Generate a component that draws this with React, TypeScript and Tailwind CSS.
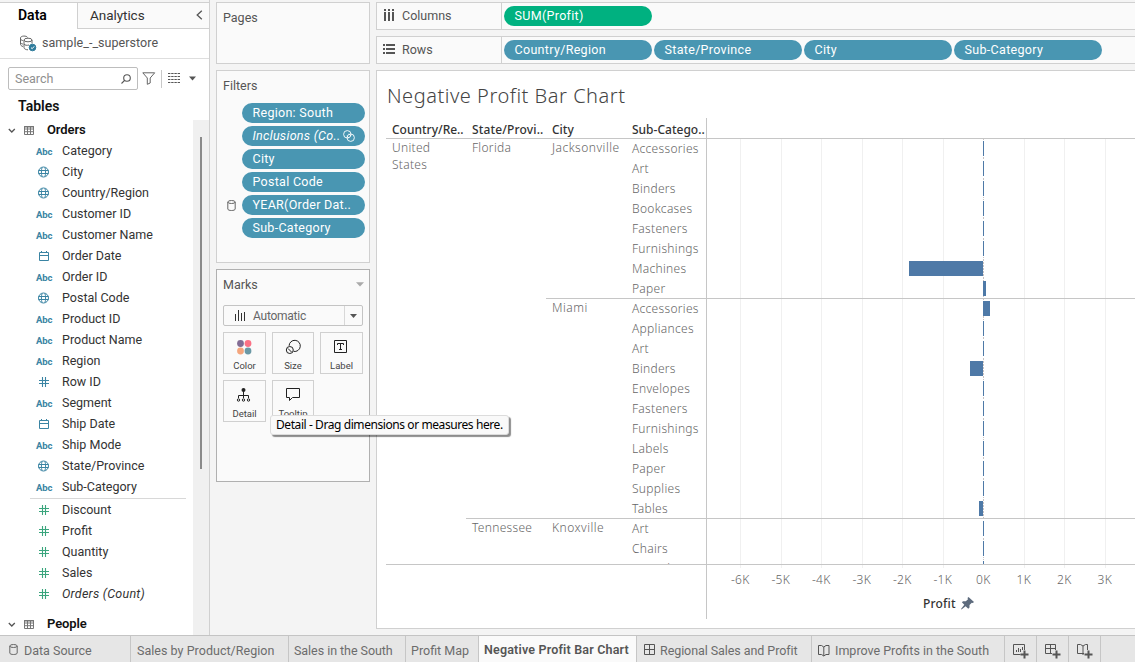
import React from "react";

type FieldKind = "abc" | "geo" | "date" | "num";
type Field = { kind: FieldKind; name: string };

const dimensions: Field[] = [
  { kind: "abc", name: "Category" },
  { kind: "geo", name: "City" },
  { kind: "geo", name: "Country/Region" },
  { kind: "abc", name: "Customer ID" },
  { kind: "abc", name: "Customer Name" },
  { kind: "date", name: "Order Date" },
  { kind: "abc", name: "Order ID" },
  { kind: "geo", name: "Postal Code" },
  { kind: "abc", name: "Product ID" },
  { kind: "abc", name: "Product Name" },
  { kind: "abc", name: "Region" },
  { kind: "num", name: "Row ID" },
  { kind: "abc", name: "Segment" },
  { kind: "date", name: "Ship Date" },
  { kind: "abc", name: "Ship Mode" },
  { kind: "geo", name: "State/Province" },
  { kind: "abc", name: "Sub-Category" },
];
const measures = ["Discount", "Profit", "Quantity", "Sales", "Orders (Count)"];

type City = { name: string; rows: [string, number, number][] };
// Each row holds its label, then the bar's start and width in pixels from the zero line.
const florida: City[] = [
  {
    name: "Jacksonville",
    rows: [
      ["Accessories", 0, 1], ["Art", 0, 1], ["Binders", 0, 1], ["Bookcases", 0, 1],
      ["Fasteners", 0, 1], ["Furnishings", 0, 1], ["Machines", -74, 74], ["Paper", 0, 3],
    ],
  },
  {
    name: "Miami",
    rows: [
      ["Accessories", 0, 7], ["Appliances", 0, 1], ["Art", 0, 1], ["Binders", -13, 13],
      ["Envelopes", 0, 1], ["Fasteners", 0, 1], ["Furnishings", 0, 1], ["Labels", 0, 1],
      ["Paper", 0, 1], ["Supplies", 0, 1], ["Tables", -4, 4],
    ],
  },
];
const tennessee: City[] = [
  { name: "Knoxville", rows: [["Art", 0, 1], ["Chairs", 0, 1], ["Furnishings", 0, 1]] },
];
const bars = [...florida, ...tennessee].flatMap((c) => c.rows);
const ticks: [number, string][] = [
  [33, "-6K"], [74, "-5K"], [114, "-4K"], [155, "-3K"], [195, "-2K"],
  [236, "-1K"], [276, "0K"], [317, "1K"], [357, "2K"], [398, "3K"],
];
const ZERO = 276;

function FieldIcon({ kind, green }: { kind: FieldKind; green?: boolean }) {
  if (kind === "abc")
    return <span className="w-[17px] text-[9.5px] leading-none font-bold tracking-[-0.1px] text-[#3a84a3]">Abc</span>;
  const stroke = green ? "#3aa57d" : "#3a84a3";
  return (
    <svg width="12" height="12" viewBox="0 0 12 12" fill="none" stroke={stroke} className="-mt-px ml-[2px] shrink-0">
      {kind === "geo" && (
        <>
          <circle cx="5.5" cy="6" r="5" />
          <path d="M0.5 4.5H10.5M0.5 7.5H10.5M4 1.5C3.2 4.2 3.2 7.8 4 10.5M7 1.5C7.8 4.2 7.8 7.8 7 10.5" />
        </>
      )}
      {kind === "date" && <path d="M1.5 2.5H10.5V10.5H1.5ZM1.5 5.5H10.5M3.5 1V3M8.5 1V3" />}
      {kind === "num" && <path d="M4.5 1V11M7.5 1V11M1 4.5H11M1 7.5H11" strokeWidth="1.1" />}
    </svg>
  );
}

function TableHeading({ name }: { name: string }) {
  return (
    <div className="flex h-[21px] items-center pl-[8px]">
      <svg width="8" height="12" viewBox="0 0 8 12" fill="none" stroke="#555" strokeWidth="1.3" className="-mt-px">
        <path d="M0.8 5L3.8 8L6.8 5" />
      </svg>
      <svg width="11" height="11" viewBox="0 0 11 11" fill="none" stroke="#777" className="ml-[8px]">
        <path d="M0.5 1.5H9.5V9.5H0.5Z M0.5 4H9.5M0.5 6.7H9.5M3.5 2V9.5M6.5 2V9.5" />
        <path d="M0 1.8H10" strokeWidth="1.4" />
      </svg>
      <span className="-mt-[2px] ml-[12px] text-[13px] font-semibold tracking-[-0.1px] text-[#111]">{name}</span>
    </div>
  );
}

function Cylinder({ className = "" }: { className?: string }) {
  return (
    <svg width="9" height="11" viewBox="0 0 9 11" fill="none" stroke="#666" className={className}>
      <ellipse cx="4.5" cy="2" rx="3.7" ry="1.5" />
      <path d="M0.8 2V9C0.8 11 8.2 11 8.2 9V2" />
    </svg>
  );
}

function DataPane() {
  return (
    <aside className="flex w-[210px] shrink-0 flex-col border-r border-[#d0d0d0] bg-white">
      <div className="h-[2px] bg-[#f4f4f4]" />
      <div className="flex h-[27px] border-t border-[#d0d0d0]">
        <div className="w-[77px] pl-[18px] text-[14px] leading-[25px] font-semibold text-black">Data</div>
        <div className="flex flex-1 items-center justify-between border-b border-l border-[#d0d0d0] bg-[#fafafa] pr-[6px] pl-[12px]">
          <span className="text-[13.5px] tracking-[-0.05px] text-[#333]">Analytics</span>
          <svg width="7" height="10" viewBox="0 0 7 10" fill="none" stroke="#555" strokeWidth="1.3" className="-mt-[2px]">
            <path d="M5.8 0.8L1.2 5L5.8 9.2" />
          </svg>
        </div>
      </div>
      <div className="flex h-[30px] items-center border-b border-[#dedede] pl-[19px]">
        <svg width="18" height="17" viewBox="0 0 18 17" fill="none" stroke="#666">
          <path d="M4 11.5C2 11 1.5 10 1.5 9V3C1.5 0.5 8 0.5 8.5 2.5M1.5 4C2 5 3 5.5 4 5.5M1.5 7.5C2 8.5 3 9 4 9" />
          <ellipse cx="9" cy="5" rx="4" ry="1.8" />
          <path d="M5 5V12.5C5 14 7 14.8 9 14.8M13 5V8.5M5 9C6 10.5 8 10.5 10 10" />
          <circle cx="13.5" cy="12.5" r="3.3" fill="#2f7c9c" stroke="#2f7c9c" />
          <path d="M12 12.6L13.2 13.7L15.2 11.4" stroke="#fff" />
        </svg>
        <span className="ml-[5px] text-[12.5px] tracking-[0.05px] text-[#555]">sample_-_superstore</span>
      </div>
      <div className="flex h-[39px] items-center pl-[8px]">
        <div className="flex h-[23px] w-[130px] items-center justify-between rounded-[2px] border border-[#bdbdbd] pr-[6px] pl-[6px]">
          <span className="mt-px text-[12.5px] text-[#8f8f8f]">Search</span>
          <svg width="10" height="10" viewBox="0 0 10 10" fill="none" stroke="#555" strokeWidth="1.1">
            <circle cx="6" cy="4" r="3.3" />
            <path d="M3.6 6.4L0.5 9.5" />
          </svg>
        </div>
        <svg width="14" height="13" viewBox="0 0 14 13" fill="none" stroke="#666" className="ml-[4px]">
          <path d="M0.8 0.8H12.7L8.2 6V11L5.3 12.3V6Z" />
        </svg>
        <div className="ml-[5px] h-[18px] w-px bg-[#c8c8c8]" />
        <svg width="12" height="10" viewBox="0 0 12 10" stroke="#555" strokeDasharray="2.4 0.8" className="-mt-[2px] ml-[6px]">
          <path d="M0 0.5H12M0 3.5H12M0 6.5H12M0 9.5H12" />
        </svg>
        <svg width="7" height="5" viewBox="0 0 7 5" fill="#555" className="ml-[9px]">
          <path d="M0 0.5H7L3.5 4.5Z" />
        </svg>
      </div>
      <div className="h-[22px] pl-[18px] text-[14px] leading-[17px] font-semibold text-[#111]">Tables</div>
      <div className="flex min-h-0 flex-1">
        <div className="flex flex-1 flex-col">
          <TableHeading name="Orders" />
          {dimensions.map((f) => (
            <div key={f.name} className="flex h-[21px] items-center pl-[36px]">
              <span className="flex w-[26px] items-center">
                <FieldIcon kind={f.kind} />
              </span>
              <span className="text-[12.5px] whitespace-nowrap text-[#333]">{f.name}</span>
            </div>
          ))}
          <div className="mr-[7px] ml-[30px] h-px bg-[#d8d8d8]" />
          <div className="pt-px">
            {measures.map((m) => (
              <div key={m} className="flex h-[21px] items-center pl-[36px]">
                <span className="flex w-[26px] items-center">
                  <FieldIcon kind="num" green />
                </span>
                <span className={`text-[12.5px] text-[#333] ${m === "Orders (Count)" ? "tracking-[0.25px] italic" : ""}`}>{m}</span>
              </div>
            ))}
          </div>
          <div className="mt-[9px]">
            <TableHeading name="People" />
          </div>
        </div>
        <div className="w-[16px] bg-[#f0f0f0] pt-[17px] pl-[7px]">
          <div className="h-[332px] w-[2px] bg-[#8a8a8a]" />
        </div>
      </div>
    </aside>
  );
}

function MarkButton({ label, children }: { label: string; children: React.ReactNode }) {
  return (
    <div className="flex h-[42px] flex-col items-center justify-between border border-[#d0d0d0] bg-[#fafafa] pt-[5px] pb-[2px]">
      <svg width="18" height="18" viewBox="0 0 18 18" fill="none" stroke="#222" className="-ml-px">
        {children}
      </svg>
      <span className="text-[9.5px] leading-[11px] text-[#444]">{label}</span>
    </div>
  );
}

const filterPills = ["Region: South", "Inclusions (Co..", "City", "Postal Code", "YEAR(Order Dat..", "Sub-Category"];

function Cards() {
  return (
    <div className="flex w-[154px] shrink-0 flex-col gap-[6px] text-[13px] text-[#555]">
      <section className="h-[62px] border border-[#d0d0d0] bg-[#fafafa] pt-[5px] pl-[6px] text-[12.5px] leading-[20px]">Pages</section>
      <section className="h-[193px] border border-[#d0d0d0] bg-[#fafafa] pt-[5px] pl-[6px]">
        <div className="text-[12.5px] leading-[20px]">Filters</div>
        <div className="mt-[7px] flex flex-col gap-[3px]">
          {filterPills.map((p, i) => (
            <div key={p} className="flex h-[20px] items-center">
              <div className="w-[19px] pl-[4px]">{i === 4 && <Cylinder />}</div>
              <div className="flex h-[20px] w-[123px] items-center justify-between rounded-full bg-[#4996b2] pr-[10px] pl-[10.5px] text-[12.5px] text-white">
                <span className={`tracking-[0.28px] whitespace-nowrap ${i === 1 ? "italic" : ""}`}>{p}</span>
                {i === 1 && (
                  <svg width="12" height="12" viewBox="0 0 12 12" fill="none" stroke="#fff" strokeWidth="0.9">
                    <circle cx="4.3" cy="4.3" r="3.7" />
                    <circle cx="7.7" cy="7.7" r="3.7" />
                    <path d="M3.8 6L6 8.2M6 3.8L8.2 6" />
                  </svg>
                )}
              </div>
            </div>
          ))}
        </div>
      </section>
      <section className="h-[213px] border border-[#b0b0b0] bg-[#fafafa] px-[6px] pt-[5px]">
        <div className="flex h-[20px] items-center justify-between text-[12.5px]">
          <span>Marks</span>
          <svg width="8" height="5" viewBox="0 0 8 5" fill="#aaa" className="-mt-[2px] -mr-px">
            <path d="M0 0.3H8L4 4.5Z" />
          </svg>
        </div>
        <div className="mt-[10px] flex h-[21px] items-center rounded-[2px] border border-[#c4c4c4]">
          <svg width="12" height="13" viewBox="0 0 12 13" stroke="#333" className="ml-[10px]">
            <path d="M1.5 5V12M4.5 1V12M7.5 4V12M10.5 3V12" />
          </svg>
          <span className="mt-px ml-[7px] flex-1 text-[12px] tracking-[-0.25px] text-[#666]">Automatic</span>
          <div className="flex h-full w-[18px] items-center justify-center border-l border-[#d8d8d8]">
            <svg width="7" height="4" viewBox="0 0 7 4" fill="#555">
              <path d="M0 0H7L3.5 4Z" />
            </svg>
          </div>
        </div>
        <div className="mt-[6px] grid grid-cols-[43px_42px_43px] gap-[6px]">
          <MarkButton label="Color">
            <g stroke="none">
              <circle cx="5.5" cy="5.5" r="3.4" fill="#826c94" />
              <circle cx="13" cy="5.5" r="3.4" fill="#fb7185" />
              <circle cx="5.5" cy="13" r="3.4" fill="#f4a57c" />
              <circle cx="13" cy="13" r="3.4" fill="#6a98a5" />
            </g>
          </MarkButton>
          <MarkButton label="Size">
            <path d="M5.1 7.8A5.6 5.6 0 1 1 9.6 13.4" />
            <circle cx="5.8" cy="12" r="3.5" />
            <path d="M4 10.5L7.5 14" />
          </MarkButton>
          <MarkButton label="Label">
            <path d="M2.5 2.5H14.5V14.5H2.5ZM5.5 7V5.5H11.5V7M8.5 5.5V11.5M7 11.5H10" />
          </MarkButton>
          <MarkButton label="Detail">
            <circle cx="8.5" cy="4" r="2" fill="#222" stroke="none" />
            <path d="M8.5 5V12M3.5 12V9.5H13.5V12" />
            <circle cx="3.5" cy="14" r="1.2" />
            <circle cx="8.5" cy="14" r="1.2" />
            <circle cx="13.5" cy="14" r="1.2" />
          </MarkButton>
          <MarkButton label="Tooltip">
            <path d="M2.5 2.5H15.5V11.5H8.5L5.5 14.5V11.5H2.5Z" />
          </MarkButton>
        </div>
      </section>
    </div>
  );
}

function Shelf({ label, pills, green }: { label: string; pills: string[]; green?: boolean }) {
  return (
    <div className="flex h-[28px] items-stretch border-y border-l border-[#d0d0d0] bg-[#fafafa]">
      <div className="flex w-[125px] items-center border-r border-[#d0d0d0] pl-[6px]">
        <svg width="13" height="12" viewBox="0 0 13 12" fill="#555" className="-mt-[2px]">
          {green ? (
            <path d="M1 0h2v2H1zM5 0h2v2H5zM9 0h2v2H9zM1 3h2v9H1zM5 3h2v9H5zM9 3h2v9H9z" />
          ) : (
            <path d="M0 1h2v2H0zM0 5h2v2H0zM0 9h2v2H0zM3 1h9v2H3zM3 5h9v2H3zM3 9h9v2H3z" />
          )}
        </svg>
        <span className="ml-[6px] text-[12.5px] text-[#555]">{label}</span>
      </div>
      <div className="flex items-center gap-[2px] pl-[2px]">
        {pills.map((p) => (
          <div
            key={p}
            className={`flex h-[20px] w-[148px] items-center rounded-full pl-[10.5px] text-[12.5px] tracking-[0.32px] text-white ${green ? "bg-[#00b180]" : "bg-[#4996b2]"}`}
          >
            {p}
          </div>
        ))}
      </div>
    </div>
  );
}

function StateGroup({ name, cities, last }: { name: string; cities: City[]; last?: boolean }) {
  return (
    <div className="flex">
      <div className={`w-[80px] pl-[6px] leading-[17px] ${last ? "" : "border-b border-[#c6c6c6]"}`}>{name}</div>
      <div>
        {cities.map((c) => (
          <div key={c.name} className={`flex ${last ? "" : "border-b border-[#c6c6c6]"}`}>
            <div className="w-[80px] pl-[6px] leading-[17px] tracking-[0.5px]">{c.name}</div>
            <div className={last ? "w-[80px]" : "-mb-px w-[80px]"}>
              {c.rows.map(([r]) => (
                <div key={r} className="h-[20px] pl-[6px] leading-[20px]">{r}</div>
              ))}
            </div>
          </div>
        ))}
      </div>
    </div>
  );
}

function Sheet() {
  return (
    <div className="mt-[6px] flex h-[559px] flex-col border-y border-l border-[#d0d0d0] bg-white font-['Noto_Sans',sans-serif]">
      <h1 className="h-[47px] pt-[12px] pl-[10px] text-[20px] leading-[26px] font-light tracking-[0.52px] text-[#444]">
        Negative Profit Bar Chart
      </h1>
      <div className="flex pl-[9px]">
        <div className="w-[320px] text-[12px]">
          <div className="grid h-[21px] grid-cols-4 border-b border-[#c6c6c6] pt-[3px] text-[12px] leading-[17px] font-medium text-[#333]">
            <span className="pl-[6px] whitespace-nowrap">Country/Re..</span>
            <span className="pl-[6px] tracking-[0.15px] whitespace-nowrap">State/Provi..</span>
            <span className="pl-[6px] whitespace-nowrap">City</span>
            <span className="pl-[6px] whitespace-nowrap">Sub-Catego..</span>
          </div>
          <div className="flex h-[426px] overflow-hidden border-b border-[#c6c6c6] font-light tracking-[0.3px] text-[#666]">
            <div className="w-[80px] pr-[20px] pl-[6px] leading-[17px]">United States</div>
            <div>
              <StateGroup name="Florida" cities={florida} />
              <StateGroup name="Tennessee" cities={tennessee} last />
            </div>
          </div>
        </div>
        <div className="flex h-[501px] flex-1 flex-col overflow-hidden border-l border-[#c6c6c6]">
          <svg width="428" height="451" viewBox="0 0 428 451" shapeRendering="crispEdges" className="shrink-0">
            {ticks.map(([x]) => (
              <rect key={x} x={x} y="21" width="1" height={x === ZERO ? 0 : 429} fill="#f0f0f0" />
            ))}
            <path d="M276.5 21V446" stroke="#c9c3c3" strokeDasharray="2 1" />
            {bars.map(([, start, width], i) => (
              <g key={i}>
                {width === 1 && <rect x={ZERO} y={20 + i * 20 + 2} width="1" height={i === 21 ? 4 : 17} fill="#fff" />}
                <rect x={ZERO + start} y={20 + i * 20 + 3} width={width} height={i === 21 ? 3 : 15} fill="#4e79a7" />
              </g>
            ))}
            <path d="M0 20.5H428M0 180.5H428M0 400.5H428M0 446.5H428" stroke="#c6c6c6" />
          </svg>
          <div className="flex h-[22px] pt-[2px] pl-[13px] text-[12px] leading-[18px] font-light tracking-[0.2px] text-[#666]">
            {ticks.map(([x, t]) => (
              <span key={t} className="w-[40.5px] shrink-0 text-center">{t}</span>
            ))}
          </div>
          <div className="flex items-center pt-[4px] pl-[216px] text-[12px] leading-[18px] font-medium tracking-[0.2px] text-[#333]">
            Profit
            <svg width="13" height="13" viewBox="0 0 13 13" fill="#5d6b7d" className="-mt-px ml-[5px]">
              <path d="M7.5 0L13 5L11.8 6L10.8 5.7L8.5 8L8.5 10.5L7.3 11.7L4.6 9.2L0.5 12.5L0 12L3.3 7.8L0.9 5.3L2 4.2L4.8 4.2L7 2.2L6.5 1Z" />
            </svg>
          </div>
        </div>
      </div>
    </div>
  );
}

function DashIcon({ className = "" }: { className?: string }) {
  return (
    <svg width="12" height="12" viewBox="0 0 12 12" fill="none" stroke="#555" className={className}>
      <path d="M0.5 0.5H10.5V10.5H0.5ZM5.5 0.5V10.5M0.5 5.5H10.5" />
    </svg>
  );
}
function StoryIcon() {
  return (
    <svg width="12" height="13" viewBox="0 0 12 13" fill="none" stroke="#555" className="-mt-[2px]">
      <path d="M0.5 1.5H3.5L5.8 3L8 1.5H11V10.5H8L5.8 12L3.5 10.5H0.5ZM5.8 3V12" />
    </svg>
  );
}
function NewTab({ kind }: { kind: "sheet" | "dash" | "story" }) {
  return (
    <div className="flex w-[32px] items-center justify-center border-r border-[#c6c6c6] pt-[4px]">
      <svg width="16" height="16" viewBox="0 0 16 16" fill="none" stroke="#555">
        {kind === "sheet" && <path d="M7.5 11.5H0.5V1.5H11.5V7M3.5 7V9M5.5 5V9M7.5 6V9M9.5 4V7" />}
        {kind === "dash" && <path d="M7 10.5H0.5V1.5H10.5V7M5.5 1.5V10.5M0.5 5.5H10.5" />}
        {kind === "story" && <path d="M7 10.5H6L4 10.5H0.5V1.5H3.5L6 3L8.5 1.5H10.5V7M6 3V12" />}
        <path d="M11.5 7.5V15.5M7.5 11.5H15.5" strokeWidth="2" />
      </svg>
    </div>
  );
}

function BottomTabs() {
  const tab = "flex items-center border-r border-[#c6c6c6] pl-[6px] pt-[5px] whitespace-nowrap";
  return (
    <footer className="flex h-[27px] shrink-0 border-t border-[#c4c4c4] bg-[#e6e6e6] text-[12.5px] text-[#6c6c6c]">
      <div className={`${tab} w-[131px]`}>
        <Cylinder className="-mt-[5px] mr-[6px] ml-[3px]" />
        Data Source
      </div>
      <div className={`${tab} w-[158px] tracking-[0.03px]`}>Sales by Product/Region</div>
      <div className="flex w-[117px] items-center border-r border-[#c6c6c6] pt-[5px] pl-[5px] tracking-[-0.05px] whitespace-nowrap">Sales in the South</div>
      <div className="flex w-[73px] items-center border-r border-[#c6c6c6] pt-[5px] pl-[5px] whitespace-nowrap">Profit Map</div>
      <div className="flex w-[158px] items-center border-r border-[#c6c6c6] bg-[#fafafa] pt-[3px] pl-[5px] font-semibold tracking-[0.18px] whitespace-nowrap text-[#555]">
        Negative Profit Bar Chart
      </div>
      <div className={`${tab} w-[175px] tracking-[-0.07px]`}>
        <DashIcon className="-mt-[4px] mr-[4px] ml-px" />
        Regional Sales and Profit
      </div>
      <div className={`${tab} w-[193px] gap-[5px]`}>
        <StoryIcon />
        Improve Profits in the South
      </div>
      <NewTab kind="sheet" />
      <NewTab kind="dash" />
      <NewTab kind="story" />
    </footer>
  );
}

export default function App() {
  return (
    <div className="relative flex h-[662px] w-[1135px] flex-col overflow-hidden bg-[#f4f4f4] font-['Roboto',sans-serif]">
      <div className="flex h-[635px]">
        <DataPane />
        <div className="flex min-w-0 flex-1 gap-[6px] pt-[2px] pl-[6px]">
          <Cards />
          <main className="flex min-w-0 flex-1 flex-col">
            <Shelf label="Columns" pills={["SUM(Profit)"]} green />
            <div className="mt-[6px]">
              <Shelf label="Rows" pills={["Country/Region", "State/Province", "City", "Sub-Category"]} />
            </div>
            <Sheet />
          </main>
        </div>
      </div>
      <BottomTabs />
      <div className="absolute top-[415px] left-[270px] flex h-[20px] w-[239px] items-center rounded-[3px] border border-[#dcdcdc] bg-[#f9f9f9] pl-[5px] font-['Noto_Sans',sans-serif] text-[12px] tracking-[-0.42px] whitespace-nowrap text-black shadow-[2px_2px_1px_rgba(0,0,0,0.45)]">
        Detail - Drag dimensions or measures here.
      </div>
    </div>
  );
}
